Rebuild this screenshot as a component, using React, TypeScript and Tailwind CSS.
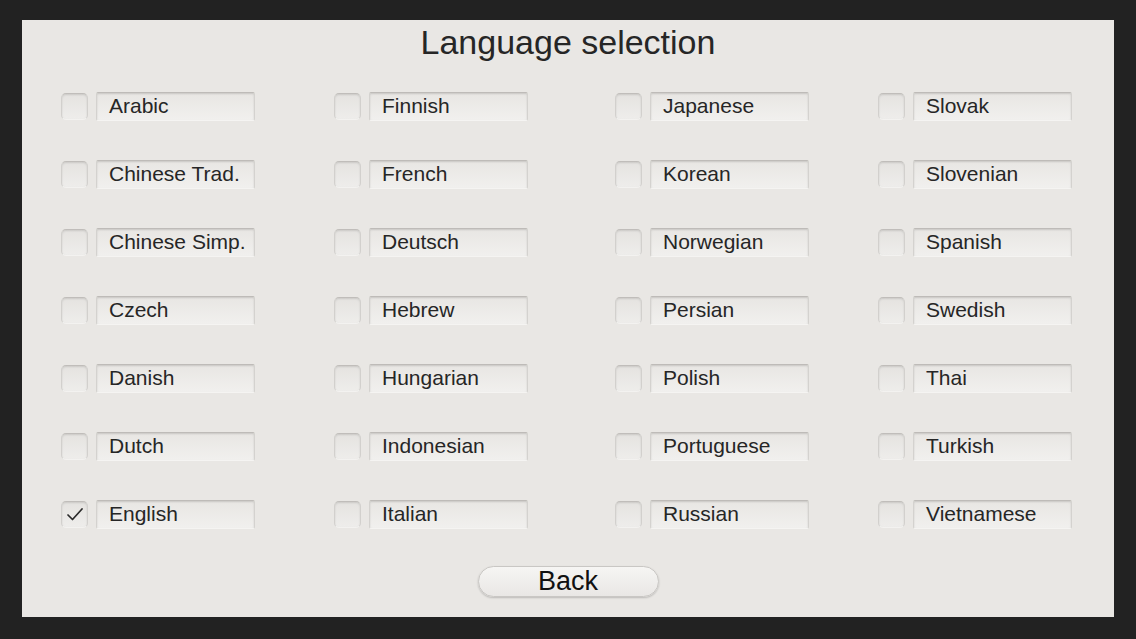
import { useState } from "react";

const columns = [
  ["Arabic", "Chinese Trad.", "Chinese Simp.", "Czech", "Danish", "Dutch", "English"],
  ["Finnish", "French", "Deutsch", "Hebrew", "Hungarian", "Indonesian", "Italian"],
  ["Japanese", "Korean", "Norwegian", "Persian", "Polish", "Portuguese", "Russian"],
  ["Slovak", "Slovenian", "Spanish", "Swedish", "Thai", "Turkish", "Vietnamese"],
];

// grid fills row by row, so flatten the columns that way
const cells: string[] = [];
for (let r = 0; r < 7; r++) {
  for (let c = 0; c < 4; c++) cells.push(columns[c][r]);
}

function Check() {
  return (
    <svg width="18" height="15" viewBox="0 0 18 15" fill="none">
      <path d="M2 8 L6.5 12.5 L16 2" stroke="#2a2a2a" strokeWidth="1.7" strokeLinecap="round" strokeLinejoin="round" />
    </svg>
  );
}

function LanguageItem({ name, selected, onSelect }: { name: string; selected: boolean; onSelect: () => void }) {
  return (
    <div className="flex h-[29px] items-center gap-[8px]" onClick={onSelect}>
      <div className="flex h-[27px] w-[27px] items-center justify-center rounded-[5px] border border-[#d2d0cd] border-t-[#c0bdba] border-b-[#f3f2f0] bg-gradient-to-b from-[#e5e3e0] to-[#eeedeb] shadow-[inset_0_1px_2px_rgba(0,0,0,0.12)]">
        {selected && <Check />}
      </div>
      <div className="h-[29px] w-[159px] rounded-[2px] border border-[#d4d2cf] border-t-[#bebbb8] border-b-[#f5f4f2] bg-gradient-to-b from-[#e8e6e3] to-[#f1f0ee] pl-[12px] text-[21px] leading-[26px] text-[#262626] shadow-[inset_0_1px_2px_rgba(0,0,0,0.14)]">
        {name}
      </div>
    </div>
  );
}

export default function App() {
  const [language, setLanguage] = useState("English");

  return (
    <div className="h-[639px] w-full bg-[#222] px-[22px] pb-[22px] pt-[20px] font-['Liberation_Sans',Arial,sans-serif]">
      <div className="flex h-[597px] flex-col bg-[#e9e7e4]">
        <h1 className="pt-[5px] text-center text-[34px] leading-[34px] text-[#262626]">Language selection</h1>

        <div className="mt-[33px] grid grid-cols-[273px_281px_263px_1fr] gap-y-[39px] pl-[39px]">
          {cells.map((name) => (
            <LanguageItem key={name} name={name} selected={language === name} onSelect={() => setLanguage(name)} />
          ))}
        </div>

        <button className="mt-[37px] h-[31px] w-[181px] self-center rounded-full border border-[#c9c7c4] bg-gradient-to-b from-[#f6f5f3] to-[#e9e7e5] text-[27px] leading-[29px] text-[#111] shadow-[0_1px_2px_rgba(0,0,0,0.2)]">
          Back
        </button>
      </div>
    </div>
  );
}
